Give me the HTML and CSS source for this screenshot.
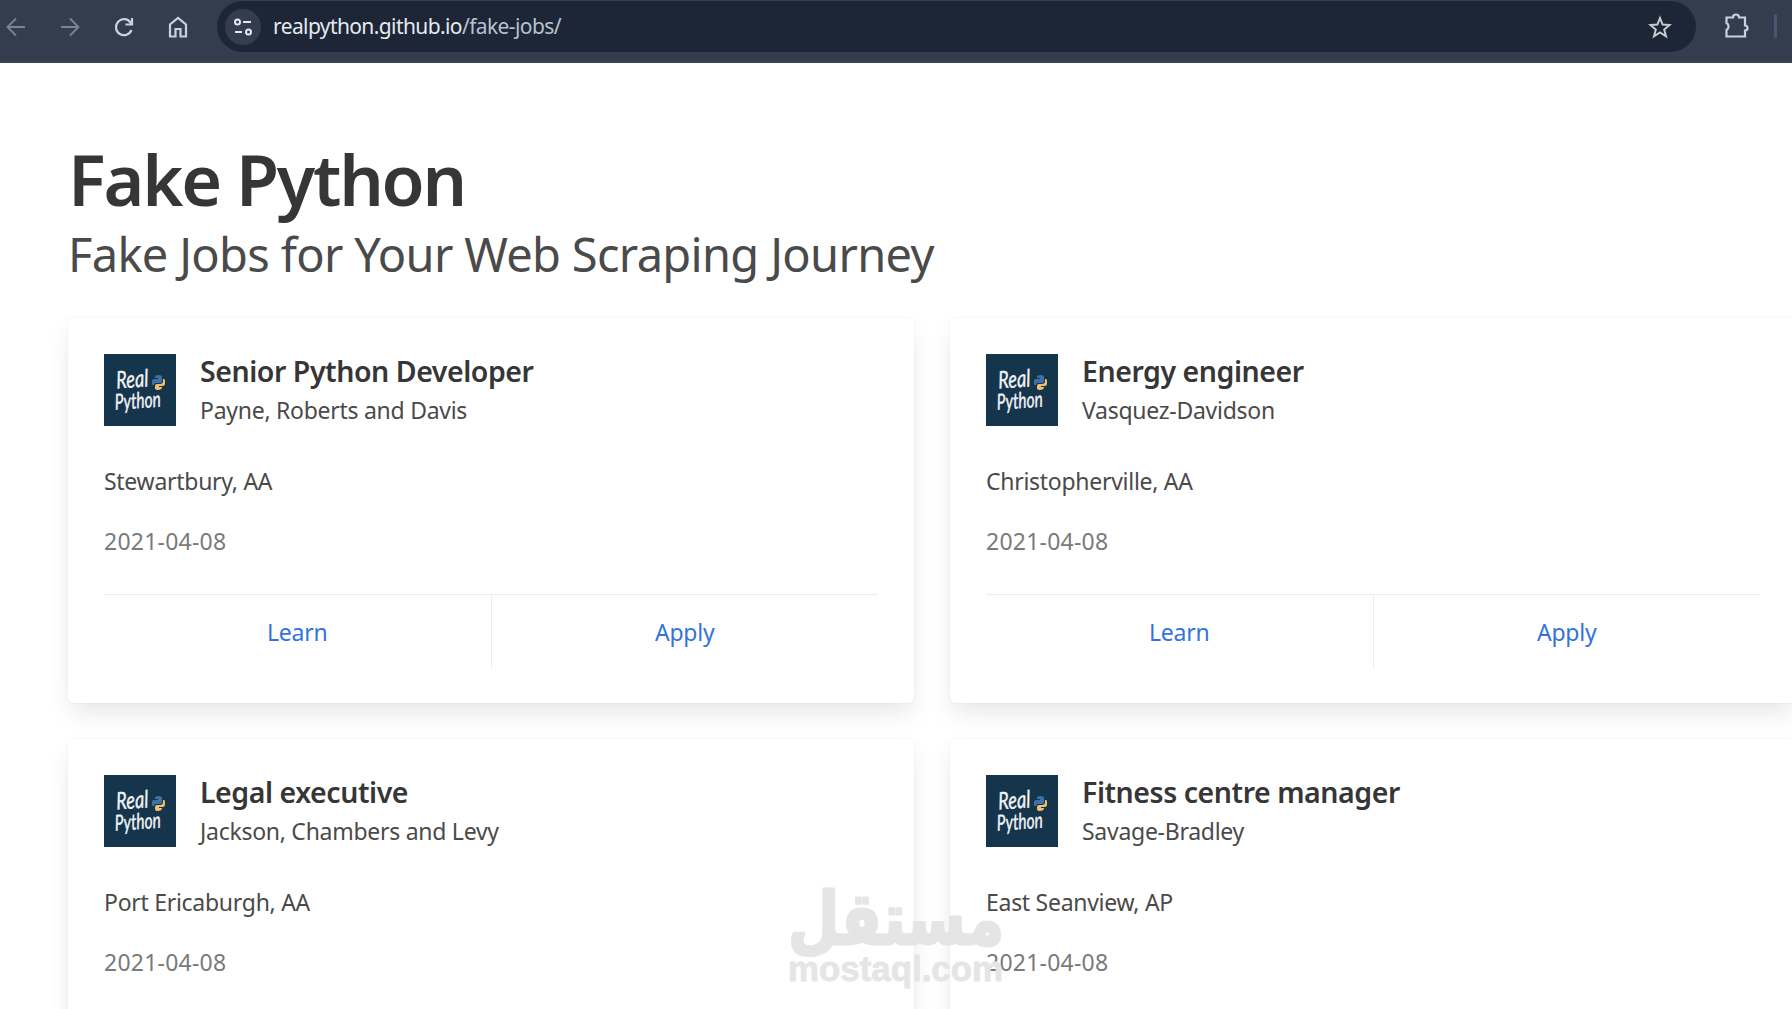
FILE: index.html
```html
<!DOCTYPE html>
<html lang="en">
<head>
<meta charset="UTF-8">
<meta name="viewport" content="width=device-width, initial-scale=1.0">
<title>Fake Python</title>
<link rel="stylesheet" href="styles.css">
</head>
<body>

<!-- shared logo -->
<svg class="sprite" aria-hidden="true">
    <symbol id="logo" viewBox="0 0 72 72">
        <rect width="72" height="72" fill="#15354c"/>
        <g class="logo-text" transform="rotate(-4 36 36)">
            <text x="13" y="33" font-size="24" textLength="32" lengthAdjust="spacingAndGlyphs">Real</text>
            <text x="10" y="54" font-size="22" textLength="46" lengthAdjust="spacingAndGlyphs">Python</text>
        </g>
        <path fill="#3b72a8" d="M48 30v-3q0-2 2-2h4v-1h-3v-1q0-2 3.500-2t3.500 2v4q0 2-2 2h-4q-2 0-2 2h-1q-1 0-1-1z"/>
        <path fill="#f2bf6b" d="M60 25h-1v2q0 3-3 3h-3q-2 0-2 2v2q0 2 3 2t4-2v-1h-3v-1h4q2 0 2-3v-2q0-2-1-2z"/>
    </symbol>
</svg>

<header class="toolbar">
    <svg class="icon icon-back" viewBox="0 0 24 24"><path d="M21 12H4M12 3.500L3.500 12L12 20.500"/></svg>
    <svg class="icon icon-forward" viewBox="0 0 24 24"><path d="M3 12h17M12 3.500L20.500 12L12 20.500"/></svg>
    <svg class="icon icon-reload" viewBox="0 0 24 24"><path d="M19.500 15A8 8 0 1 1 18.500 7.500L20 9M20 3v6.500h-6.500"/></svg>
    <svg class="icon icon-home" viewBox="0 0 24 24"><path d="M4 21.500V9.500L12 3L20 9.500V21.500H14.500V14H9.500V21.500Z"/></svg>
    <div class="omnibox">
        <span class="site-info">
            <svg viewBox="0 0 20 20"><circle cx="4.500" cy="5" r="2.500"/><path d="M10 5h8M2 15h7"/><circle cx="15.500" cy="15" r="2.500"/></svg>
        </span>
        <span class="url">realpython.github.io<span class="url-path">/fake-jobs/</span></span>
        <svg class="icon-star" viewBox="0 0 24 24"><path d="M12 3l2.600 6.500 7 .5-5.400 4.500 1.800 6.800L12 17.500l-6 3.800 1.800-6.800L2.400 10l7-.5z"/></svg>
    </div>
    <svg class="icon-puzzle" viewBox="0 0 26 26"><path d="M2.500 4.500h6.500a3 3 0 0 1 6 0h6v8a2.500 2.500 0 0 1 0 5v6h-18.500v-6.500a4 4 0 0 0 0-7z"/></svg>
    <span class="toolbar-divider"></span>
</header>

<main class="section">
    <h1 class="title">Fake Python</h1>
    <p class="subtitle">Fake Jobs for Your Web Scraping Journey</p>

    <div class="columns">
        <div class="card">
            <div class="media">
                <svg class="media-logo"><use href="#logo"/></svg>
                <div>
                    <h2 class="job-title">Senior Python Developer</h2>
                    <h3 class="company">Payne, Roberts and Davis</h3>
                </div>
            </div>
            <p class="location">Stewartbury, AA</p>
            <p class="date">2021-04-08</p>
            <footer class="card-footer">
                <a class="card-link">Learn</a>
                <a class="card-link">Apply</a>
            </footer>
        </div>

        <div class="card">
            <div class="media">
                <svg class="media-logo"><use href="#logo"/></svg>
                <div>
                    <h2 class="job-title">Energy engineer</h2>
                    <h3 class="company">Vasquez-Davidson</h3>
                </div>
            </div>
            <p class="location">Christopherville, AA</p>
            <p class="date">2021-04-08</p>
            <footer class="card-footer">
                <a class="card-link">Learn</a>
                <a class="card-link">Apply</a>
            </footer>
        </div>

        <div class="card">
            <div class="media">
                <svg class="media-logo"><use href="#logo"/></svg>
                <div>
                    <h2 class="job-title">Legal executive</h2>
                    <h3 class="company">Jackson, Chambers and Levy</h3>
                </div>
            </div>
            <p class="location">Port Ericaburgh, AA</p>
            <p class="date">2021-04-08</p>
        </div>

        <div class="card">
            <div class="media">
                <svg class="media-logo"><use href="#logo"/></svg>
                <div>
                    <h2 class="job-title">Fitness centre manager</h2>
                    <h3 class="company">Savage-Bradley</h3>
                </div>
            </div>
            <p class="location">East Seanview, AP</p>
            <p class="date">2021-04-08</p>
        </div>
    </div>
</main>

<svg class="watermark" viewBox="0 0 216 100">
    <text class="watermark-ar" x="108" y="56" text-anchor="middle" textLength="216" lengthAdjust="spacingAndGlyphs">مستقل</text>
    <text class="watermark-en" x="0" y="93" textLength="215" lengthAdjust="spacingAndGlyphs">mostaql.com</text>
</svg>

</body>
</html>
```
FILE: styles.css
```css
* {
    box-sizing: border-box;
}

body {
    margin: 0;
    height: 1009px;
    overflow: hidden;
    position: relative;
    background-color: #fff;
    color: #4a4a4a;
    font-family: "Noto Sans", "Open Sans", sans-serif;
    font-size: 23px;
}

h1, h2, h3, p {
    margin: 0;
}

.sprite {
    display: none;
}

/* Browser toolbar */
.toolbar {
    display: flex;
    height: 63px;
    padding: 1px 15px 0 4px;
    background-color: #343d4e;
    border-bottom: 2px solid #3e4453;
}

.icon {
    width: 24px;
    height: 24px;
    margin: 14px 30px 0 0;
    flex: none;
    fill: none;
    stroke: #c3d3e5;
    stroke-width: 2.200;
}
.icon-back,
.icon-forward {
    stroke: #7c858f;
    stroke-width: 1.800;
}
.icon-home {
    margin-right: 27px;
}

.omnibox {
    display: flex;
    align-items: center;
    flex: 1;
    height: 51px;
    padding: 0 24px 0 8px;
    border-radius: 26px;
    background-color: #1d2636;
}

.site-info {
    display: flex;
    align-items: center;
    justify-content: center;
    width: 36px;
    height: 36px;
    border-radius: 50%;
    background-color: #343d4e;
}
.site-info svg {
    width: 20px;
    height: 20px;
    fill: none;
    stroke: #e3e8ef;
    stroke-width: 2;
}

.url {
    flex: 1;
    margin-left: 12px;
    padding-bottom: 2px;
    color: #e6eaf0;
    font-size: 21px;
    letter-spacing: -0.6px;
    white-space: nowrap;
}
.url-path {
    color: #b9c1cd;
}

.icon-star {
    width: 24px;
    height: 24px;
    fill: none;
    stroke: #c9cccd;
    stroke-width: 2;
}
.icon-puzzle {
    width: 26px;
    height: 26px;
    margin: 12px 24px 0 28px;
    fill: none;
    stroke: #c3d3e5;
    stroke-width: 2.200;
}
.toolbar-divider {
    width: 3px;
    height: 24px;
    margin-top: 13px;
    border-radius: 2px;
    background-color: #4a5570;
}

/* Page */
.section {
    padding: 71px 0 0 68px;
}

.title {
    color: #363636;
    font-size: 70px;
    font-weight: 600;
    letter-spacing: -2.2px;
    line-height: 90px;
    white-space: nowrap;
}
.subtitle {
    font-size: 47px;
    letter-spacing: -0.68px;
    line-height: 60px;
    white-space: nowrap;
}

.columns {
    display: grid;
    grid-template-columns: 846px 846px;
    grid-auto-rows: 385px;
    gap: 36px;
    margin-top: 34px;
}

/* Job cards */
.card {
    padding: 36px;
    border-radius: 6px;
    background-color: #fff;
    box-shadow: 0 12px 24px -3px rgba(10, 10, 10, 0.1), 0 0 0 1px rgba(10, 10, 10, 0.02);
}

.media {
    display: flex;
    gap: 24px;
    height: 109px;
    white-space: nowrap;
}
.media-logo {
    width: 72px;
    height: 72px;
    flex: none;
}
.logo-text {
    fill: #f1f4f6;
    stroke: #f1f4f6;
    stroke-width: 0.4;
    font-family: Lato, sans-serif;
    font-style: italic;
}

.job-title {
    color: #363636;
    font-size: 28.500px;
    font-weight: 600;
    letter-spacing: -0.45px;
    line-height: 34px;
}
.company {
    font-size: 23px;
    font-weight: 400;
    letter-spacing: -0.27px;
    line-height: 44px;
}

.location,
.date {
    line-height: 36px;
}
.location {
    letter-spacing: -0.28px;
}
.date {
    margin: 24px 0 35px;
    color: #7a7a7a;
    letter-spacing: 0.23px;
}

.card-footer {
    display: flex;
    height: 74px;
    border-top: 1px solid #ededed;
}
.card-link {
    display: flex;
    align-items: center;
    justify-content: center;
    flex: 1;
    color: #3273dc;
    letter-spacing: -0.2px;
}
.card-link:first-child {
    border-right: 1px solid #ededed;
}

/* Watermark over the page */
.watermark {
    position: absolute;
    left: 788px;
    top: 888px;
    width: 216px;
    height: 100px;
    overflow: visible;
    fill: #e5e5e5;
}
.watermark-ar {
    font-family: "DejaVu Sans", sans-serif;
    font-size: 72px;
    font-weight: 700;
    stroke: #e5e5e5;
    stroke-width: 3;
    stroke-linejoin: round;
}
.watermark-en {
    font-family: "Liberation Sans", sans-serif;
    font-size: 35px;
    font-weight: 700;
    stroke: #e5e5e5;
    stroke-width: 0.8;
    stroke-linejoin: round;
}
```
